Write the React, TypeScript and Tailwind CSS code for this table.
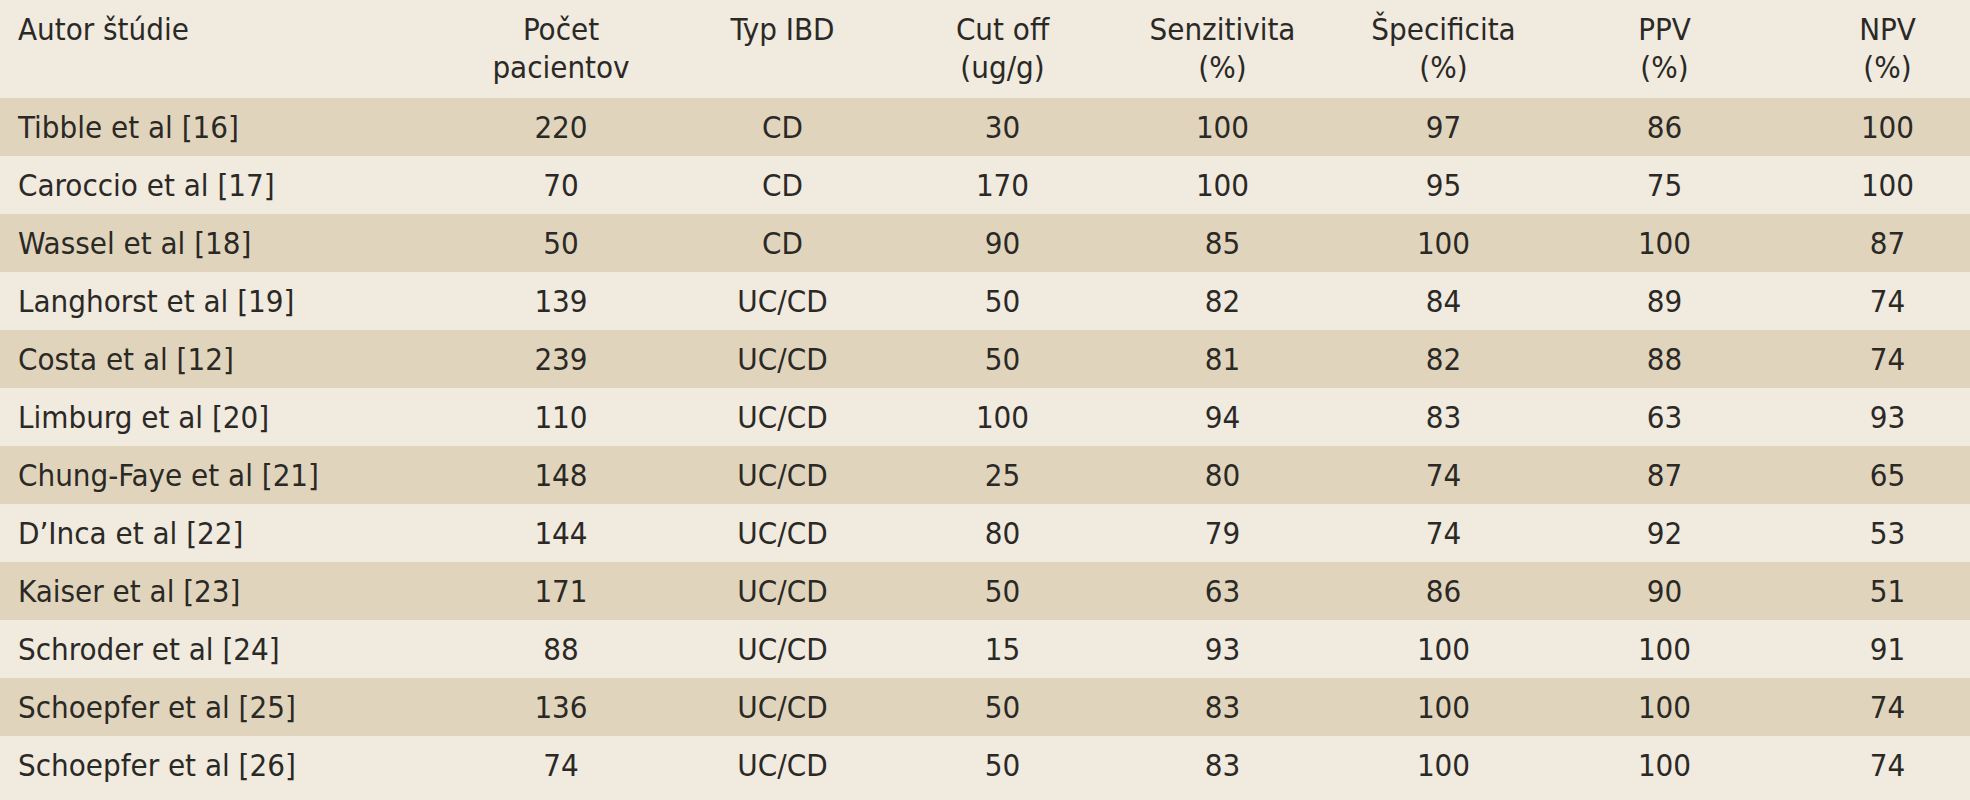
import React from "react";

/* ---------- DATA ---------- */

const rows: string[][] = [
  ["Tibble et al [16]", "220", "CD", "30", "100", "97", "86", "100"],
  ["Caroccio et al [17]", "70", "CD", "170", "100", "95", "75", "100"],
  ["Wassel et al [18]", "50", "CD", "90", "85", "100", "100", "87"],
  ["Langhorst et al [19]", "139", "UC/CD", "50", "82", "84", "89", "74"],
  ["Costa et al [12]", "239", "UC/CD", "50", "81", "82", "88", "74"],
  ["Limburg et al [20]", "110", "UC/CD", "100", "94", "83", "63", "93"],
  ["Chung-Faye et al [21]", "148", "UC/CD", "25", "80", "74", "87", "65"],
  ["D\u2019Inca et al [22]", "144", "UC/CD", "80", "79", "74", "92", "53"],
  ["Kaiser et al [23]", "171", "UC/CD", "50", "63", "86", "90", "51"],
  ["Schroder et al [24]", "88", "UC/CD", "15", "93", "100", "100", "91"],
  ["Schoepfer et al [25]", "136", "UC/CD", "50", "83", "100", "100", "74"],
  ["Schoepfer et al [26]", "74", "UC/CD", "50", "83", "100", "100", "74"],
];

const header: [string, string?][] = [
  ["Autor štúdie"],
  ["Počet", "pacientov"],
  ["Typ IBD"],
  ["Cut off", "(ug/g)"],
  ["Senzitivita", "(%)"],
  ["Špecificita", "(%)"],
  ["PPV", "(%)"],
  ["NPV", "(%)"],
];

const grid =
  "grid grid-cols-[450px_222px_221px_219px_221px_221px_221px_1fr]";

const cell = (i: number) =>
  i === 0 ? "pl-[18px] text-left" : i === 7 ? "pl-[30px] text-center" : "text-center";

/* ---------- PAGE ---------- */

export default function App() {
  return (
    <main
      className="w-[1970px] h-[800px] overflow-hidden bg-[#f0eadf] text-[#2b2926] text-[31px] leading-[38px]"
      style={{ fontFamily: '"DejaVu Sans Condensed", "DejaVu Sans", sans-serif' }}
    >
      {/* HEADER */}
      <div className={`${grid} h-[98px] pt-[10px]`}>
        {header.map(([a, b], i) => (
          <div key={i} className={cell(i)}>
            <div>{a}</div>
            {b && <div>{b}</div>}
          </div>
        ))}
      </div>

      {/* BODY */}
      {rows.map((r, ri) => (
        <div
          key={ri}
          className={`${grid} h-[58px] items-center ${
            ri % 2 === 0 ? "bg-[#e0d5bc]" : "bg-[#f0eadf]"
          }`}
        >
          {r.map((v, i) => (
            <div key={i} className={cell(i)}>
              {v}
            </div>
          ))}
        </div>
      ))}
    </main>
  );
}
